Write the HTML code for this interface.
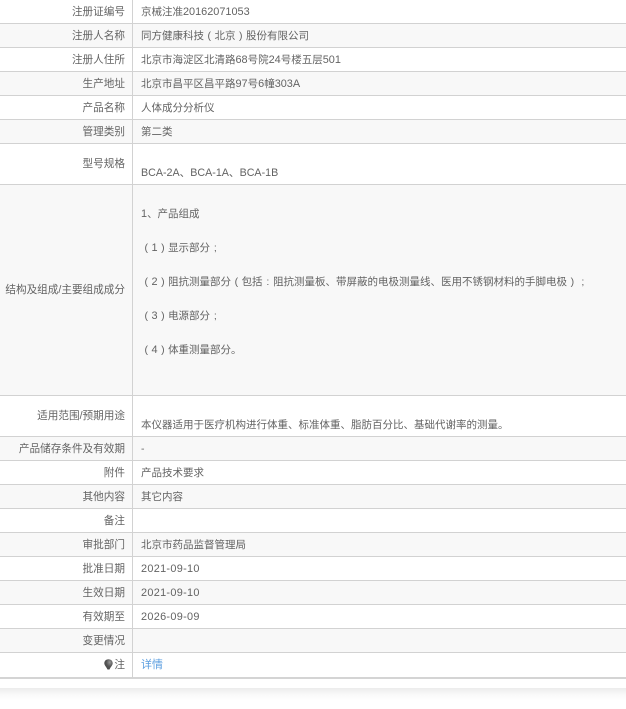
<!DOCTYPE html>
<html lang="zh">
<head>
<meta charset="utf-8">
<style>
html,body{margin:0;padding:0;background:#fff}
body{width:626px;height:709px;position:relative;overflow:hidden;font-family:"Liberation Sans","Noto Sans CJK SC","WenQuanYi Zen Hei",sans-serif;font-size:10.5px;color:#636363}
.r{position:absolute;left:0;width:626px;border-bottom:1px solid #d2d2d2;box-sizing:content-box}
.g{background:#f8f8f8}
.t{position:absolute;left:0;top:1px;width:626px;height:700px}
.l{position:absolute;left:0;width:125px;text-align:right;line-height:14px;white-space:nowrap;font-size:10.62px}
.v{position:absolute;left:141px;line-height:14px;white-space:nowrap}
.n{font-size:10.9px}
.b{font-size:10.7px}
.d{font-size:10.9px;letter-spacing:.3px}
.c{display:inline-block;width:1em;text-align:center}
.sep{position:absolute;left:132px;top:0;width:1px;height:678px;background:#d2d2d2}
.shadow{position:absolute;left:0;top:688px;width:626px;height:13px;background:linear-gradient(#ececec,#fafafa 55%,#fff)}
a{color:#5a9ddf;text-decoration:none;font-size:11px}
</style>
</head>
<body>
<div class="r" style="top:0;height:23px"></div>
<div class="r g" style="top:24px;height:23px"></div>
<div class="r" style="top:48px;height:23px"></div>
<div class="r g" style="top:72px;height:23px"></div>
<div class="r" style="top:96px;height:23px"></div>
<div class="r g" style="top:120px;height:23px"></div>
<div class="r" style="top:144px;height:40px"></div>
<div class="r g" style="top:185px;height:210px"></div>
<div class="r" style="top:396px;height:40px"></div>
<div class="r g" style="top:437px;height:23px"></div>
<div class="r" style="top:461px;height:23px"></div>
<div class="r g" style="top:485px;height:23px"></div>
<div class="r" style="top:509px;height:23px"></div>
<div class="r g" style="top:533px;height:23px"></div>
<div class="r" style="top:557px;height:23px"></div>
<div class="r g" style="top:581px;height:23px"></div>
<div class="r" style="top:605px;height:23px"></div>
<div class="r g" style="top:629px;height:23px"></div>
<div class="r" style="top:653px;height:24px;border-bottom-width:2px;border-bottom-color:#d4d4d4"></div>
<div class="sep"></div>
<div class="shadow"></div>

<div class="t">
<div class="l" style="top:4px">注册证编号</div><div class="v" style="top:4px">京械注准<span class="n">20162071053</span></div>
<div class="l" style="top:28px">注册人名称</div><div class="v" style="top:28px">同方健康科技<span class="c">(</span>北京<span class="c">)</span>股份有限公司</div>
<div class="l" style="top:52px">注册人住所</div><div class="v" style="top:52px">北京市海淀区北清路<span class="n">68</span>号院<span class="n">24</span>号楼五层<span class="n">501</span></div>
<div class="l" style="top:76px">生产地址</div><div class="v" style="top:76px">北京市昌平区昌平路<span class="n">97</span>号<span class="n">6</span>幢<span class="n">303A</span></div>
<div class="l" style="top:100px">产品名称</div><div class="v" style="top:100px">人体成分分析仪</div>
<div class="l" style="top:124px">管理类别</div><div class="v" style="top:124px">第二类</div>
<div class="l" style="top:156px">型号规格</div><div class="v b" style="top:165px">BCA-2A、BCA-1A、BCA-1B</div>
<div class="l" style="top:282px">结构及组成/主要组成成分</div>
<div class="v" style="top:206px"><span class="n">1</span>、产品组成</div>
<div class="v" style="top:240px"><span class="c">(</span><span class="n">1</span><span class="c">)</span>显示部分<span class="c">;</span></div>
<div class="v" style="top:274px"><span class="c">(</span><span class="n">2</span><span class="c">)</span>阻抗测量部分<span class="c">(</span>包括<span class="c">:</span>阻抗测量板、带屏蔽的电极测量线、医用不锈钢材料的手脚电极<span class="c">)</span><span class="c">;</span></div>
<div class="v" style="top:308px"><span class="c">(</span><span class="n">3</span><span class="c">)</span>电源部分<span class="c">;</span></div>
<div class="v" style="top:342px"><span class="c">(</span><span class="n">4</span><span class="c">)</span>体重测量部分。</div>
<div class="l" style="top:408px">适用范围/预期用途</div><div class="v" style="top:417px">本仪器适用于医疗机构进行体重、标准体重、脂肪百分比、基础代谢率的测量。</div>
<div class="l" style="top:441px">产品储存条件及有效期</div><div class="v" style="top:441px">-</div>
<div class="l" style="top:465px">附件</div><div class="v" style="top:465px">产品技术要求</div>
<div class="l" style="top:489px">其他内容</div><div class="v" style="top:489px">其它内容</div>
<div class="l" style="top:513px">备注</div>
<div class="l" style="top:537px">审批部门</div><div class="v" style="top:537px">北京市药品监督管理局</div>
<div class="l" style="top:561px">批准日期</div><div class="v d" style="top:561px">2021-09-10</div>
<div class="l" style="top:585px">生效日期</div><div class="v d" style="top:585px">2021-09-10</div>
<div class="l" style="top:609px">有效期至</div><div class="v d" style="top:609px">2026-09-09</div>
<div class="l" style="top:633px">变更情况</div>
<div class="l" style="top:657px">注</div><div class="v" style="top:657px"><a href="#">详情</a></div>
</div>
<svg style="position:absolute;left:104px;top:659px" width="9" height="11" viewBox="0 0 9 11"><defs><radialGradient id="b" cx=".65" cy=".3" r=".8"><stop offset="0" stop-color="#999"/><stop offset=".5" stop-color="#555"/><stop offset="1" stop-color="#444"/></radialGradient></defs><path d="M4.500 .2C2 .2 .3 2 .3 4.200c0 2 2.200 3.800 3.200 6.300h2c1-2.500 3.200-4.300 3.200-6.300C8.700 2 7 .2 4.500 .2z" fill="url(#b)"/></svg>
</body>
</html>
